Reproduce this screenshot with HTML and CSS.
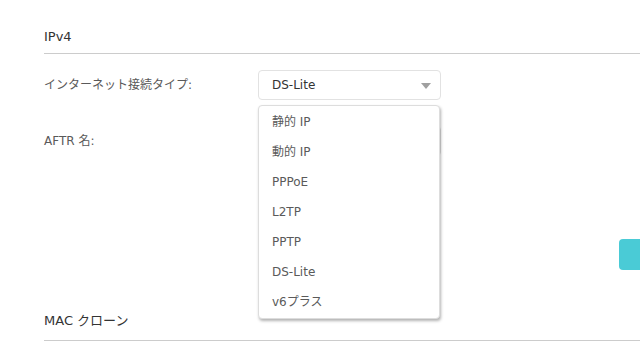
FILE: index.html
```html
<!DOCTYPE html>
<html lang="ja">
<head>
    <meta charset="UTF-8">
    <meta name="viewport" content="width=device-width, initial-scale=1.0">
    <title>IPv4</title>
    <link rel="stylesheet" href="styles.css">
</head>
<body>
    <main class="page">
        <h2 class="section-title">IPv4</h2>

        <div class="form-row">
            <label class="form-label">インターネット接続タイプ:</label>
            <div class="select-wrap">
                <div class="select-box">
                    <span>DS-Lite</span>
                    <svg class="select-arrow" width="10" height="6" viewBox="0 0 10 6"><path d="M0 0H10L5 6Z" fill="#a0a0a0"/></svg>
                </div>
                <ul class="select-menu">
                    <li>静的 IP</li>
                    <li>動的 IP</li>
                    <li>PPPoE</li>
                    <li>L2TP</li>
                    <li>PPTP</li>
                    <li>DS-Lite</li>
                    <li>v6プラス</li>
                </ul>
            </div>
        </div>

        <div class="form-row form-row-aftr">
            <label class="form-label">AFTR 名:</label>
            <div class="text-input"></div>
        </div>

        <div class="actions">
            <button class="btn-primary" type="button"></button>
        </div>

        <h2 class="section-title section-mac">MAC クローン</h2>
    </main>
</body>
</html>
```
FILE: styles.css
```css
html, body {
    margin: 0;
    padding: 0;
    background: #fff;
}
body {
    width: 640px;
    height: 354px;
    overflow: hidden;
    font-family: "DejaVu Sans", "Noto Sans CJK JP", sans-serif;
    font-size: 12px;
    color: #555;
}
.page {
    padding-left: 44px;
}
.section-title {
    margin: 0;
    padding: 28px 0 7px;
    font-size: 13px;
    font-weight: normal;
    line-height: 18px;
    color: #333;
    border-bottom: 1px solid #ccc;
}
.form-row {
    display: flex;
    align-items: center;
    margin-top: 16px;
    height: 30px;
}
.form-label {
    width: 214px;
    line-height: 18px;
    color: #5a5a5a;
}
.select-wrap {
    position: relative;
    width: 183px;
}
.select-box {
    box-sizing: border-box;
    height: 30px;
    display: flex;
    align-items: center;
    justify-content: space-between;
    padding: 0 9px 0 13px;
    border: 1px solid #e2e2e2;
    border-radius: 4px;
    color: #333;
}
.select-arrow {
    margin-top: 1px;
}
.select-menu {
    position: absolute;
    top: 35px;
    left: 0;
    z-index: 10;
    box-sizing: border-box;
    width: 182px;
    margin: 0;
    padding: 1px 0;
    list-style: none;
    background: #fff;
    border: 1px solid #ddd;
    border-radius: 4px;
    box-shadow: 1px 2px 3px rgba(0, 0, 0, 0.3);
}
.select-menu li {
    height: 30px;
    line-height: 30px;
    padding-left: 13px;
    color: #5a5a5a;
}
.form-row-aftr {
    margin-top: 26px;
}
.text-input {
    box-sizing: border-box;
    width: 183px;
    height: 30px;
    border: 1px solid #e2e2e2;
    border-radius: 4px;
}
.actions {
    display: flex;
    justify-content: flex-end;
    margin-top: 83px;
}
.btn-primary {
    width: 21px;
    height: 31px;
    border: none;
    border-radius: 4px 0 0 4px;
    background: #4acbd6;
}
.section-mac {
    padding-top: 42px;
    padding-bottom: 10px;
}
```
